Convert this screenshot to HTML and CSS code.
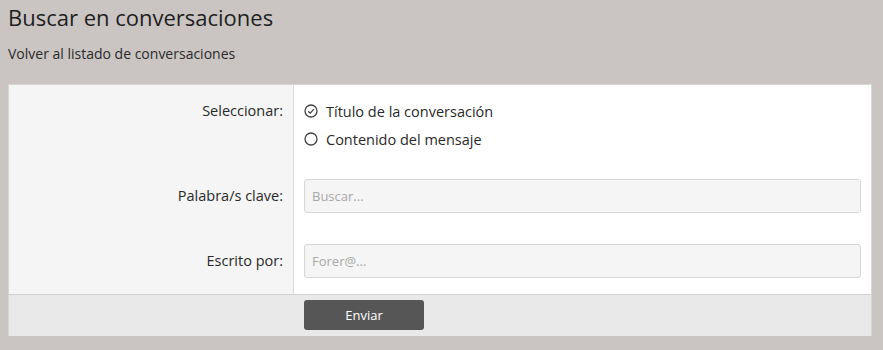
FILE: index.html
```html
<!DOCTYPE html>
<html>
<head>
    <title>Buscar en conversaciones</title>
    <link rel="stylesheet" href="styles.css">
</head>
<body>
    <div class="page">
        <h1 class="title">Buscar en conversaciones</h1>
        <a class="back" href="#">Volver al listado de conversaciones</a>

        <form class="search-form">
            <div class="row row-first">
                <div class="label">Seleccionar:</div>
                <div class="field">
                    <label class="option">
                        <svg width="14" height="14" viewBox="0 0 14 14"><circle cx="7" cy="7" r="6" fill="none" stroke="#444" stroke-width="1.3"/><path d="M4.2 7.2 L6.2 9.1 L9.9 5.1" fill="none" stroke="#444" stroke-width="1.3"/></svg>
                        Título de la conversación
                    </label>
                    <label class="option">
                        <svg width="14" height="14" viewBox="0 0 14 14"><circle cx="7" cy="7" r="6" fill="none" stroke="#444" stroke-width="1.3"/></svg>
                        Contenido del mensaje
                    </label>
                </div>
            </div>
            <div class="row">
                <div class="label">Palabra/s clave:</div>
                <div class="field">
                    <input type="text" class="text-input" placeholder="Buscar...">
                </div>
            </div>
            <div class="row row-last">
                <div class="label">Escrito por:</div>
                <div class="field">
                    <input type="text" class="text-input" placeholder="Forer@...">
                </div>
            </div>
            <div class="footer">
                <button type="button" class="submit-btn">Enviar</button>
            </div>
        </form>
    </div>
</body>
</html>
```

FILE: styles.css
```css
body {
    margin: 0;
    background-color: #cac5c3;
    font-family: "Open Sans", "Noto Sans", sans-serif;
    color: #222;
}
.page {
    padding: 0 11px 0 8px;
}
.title {
    margin: 0;
    padding-top: 2px;
    font-size: 22px;
    font-weight: normal;
    line-height: 30px;
    color: #1e1e1e;
}
.back {
    display: block;
    margin-top: 12px;
    font-size: 14px;
    line-height: 20px;
    color: #2a2a2a;
    text-decoration: none;
}
.search-form {
    margin-top: 20px;
    background-color: #fff;
    border: 1px solid #d6d6d6;
    border-bottom: none;
}
.row {
    display: flex;
}
.label {
    width: 274px;
    padding: 16px 10px 0 0;
    background-color: #f5f5f5;
    border-right: 1px solid #dcdcdc;
    text-align: right;
    font-size: 14.5px;
    line-height: 34px;
    color: #2a2a2a;
}
.field {
    flex: 1;
    padding: 16px 10px 15px 10px;
}
.row-first .label {
    padding-top: 12px;
    line-height: 28px;
}
.row-first .field {
    padding: 12px 10px 10px 10px;
}
.row-last .field {
    padding-bottom: 16px;
}
.option {
    display: flex;
    align-items: center;
    gap: 8px;
    height: 28px;
    font-size: 14.5px;
    color: #2a2a2a;
}
.text-input {
    display: block;
    box-sizing: border-box;
    width: 100%;
    height: 34px;
    padding: 0 7px;
    background-color: #f5f5f5;
    border: 1px solid #d6d6d6;
    border-radius: 3px;
    font-family: inherit;
    font-size: 13px;
}
.text-input::placeholder {
    color: #a8a8a8;
}
.footer {
    padding: 5px 0 6px 295px;
    background-color: #e9e9e9;
    border-top: 1px solid #d2d2d2;
}
.submit-btn {
    display: block;
    width: 120px;
    height: 30px;
    background-color: #565656;
    color: #fff;
    border: none;
    border-radius: 3px;
    font-family: inherit;
    font-size: 13px;
    cursor: pointer;
}
```
